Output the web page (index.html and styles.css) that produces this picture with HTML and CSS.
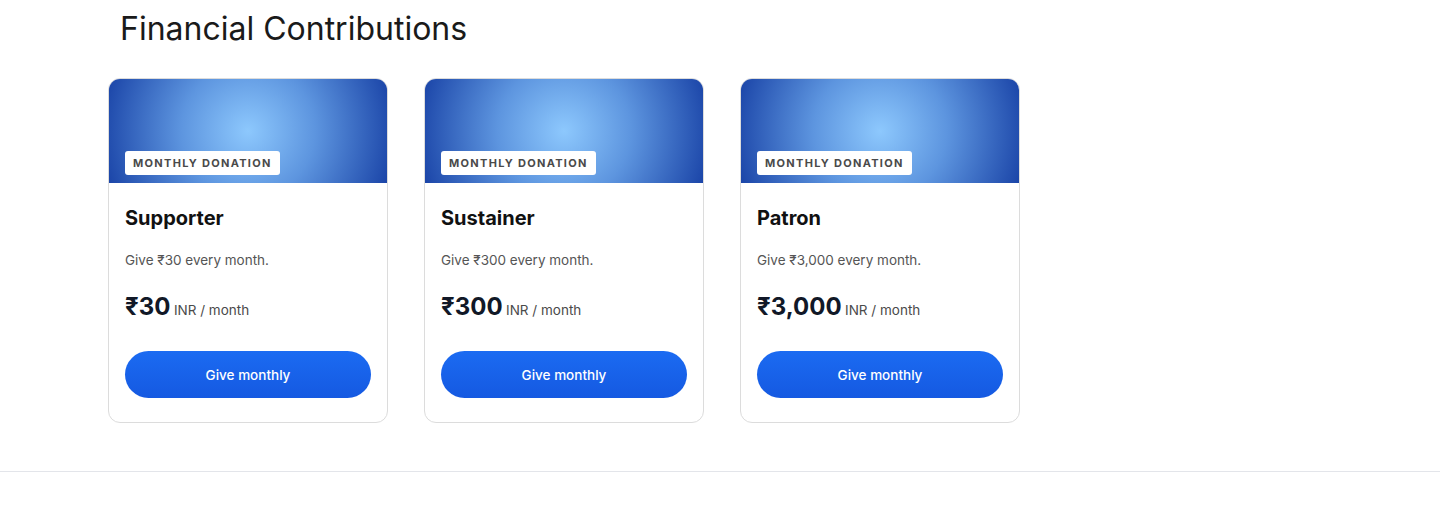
FILE: index.html
```html
<!DOCTYPE html>
<html lang="en">
<head>
<meta charset="utf-8">
<title>Financial Contributions</title>
<link rel="stylesheet" href="styles.css">
</head>
<body>
<section class="contrib">
  <h2 class="contrib-title">Financial Contributions</h2>
  <div class="tiers">
    <article class="tier">
      <div class="tier-banner"><span class="tier-badge">Monthly donation</span></div>
      <div class="tier-body">
        <h3 class="tier-name">Supporter</h3>
        <p class="tier-desc">Give ₹30 every month.</p>
        <p class="tier-price"><span class="amount">₹30</span> <span class="unit">INR / month</span></p>
        <button class="tier-btn" type="button">Give monthly</button>
      </div>
    </article>
    <article class="tier">
      <div class="tier-banner"><span class="tier-badge">Monthly donation</span></div>
      <div class="tier-body">
        <h3 class="tier-name">Sustainer</h3>
        <p class="tier-desc">Give ₹300 every month.</p>
        <p class="tier-price"><span class="amount">₹300</span> <span class="unit">INR / month</span></p>
        <button class="tier-btn" type="button">Give monthly</button>
      </div>
    </article>
    <article class="tier">
      <div class="tier-banner"><span class="tier-badge">Monthly donation</span></div>
      <div class="tier-body">
        <h3 class="tier-name">Patron</h3>
        <p class="tier-desc">Give ₹3,000 every month.</p>
        <p class="tier-price"><span class="amount">₹3,000</span> <span class="unit">INR / month</span></p>
        <button class="tier-btn" type="button">Give monthly</button>
      </div>
    </article>
  </div>
</section>
<footer class="page-foot"></footer>
</body>
</html>
```

FILE: styles.css
```css
* { box-sizing: border-box; }

html, body {
  margin: 0;
  padding: 0;
  background: #ffffff;
  font-family: Inter, "Noto Sans", "DejaVu Sans", sans-serif;
  color: #111111;
}

.contrib {
  padding: 10px 0 48px 108px;
}

.contrib-title {
  margin: 0 0 30px 12px;
  font-size: 32px;
  font-weight: 400;
  line-height: 38px;
  color: #1a1a1a;
}

.tiers {
  display: flex;
  gap: 36px;
}

.tier {
  width: 280px;
  border: 1px solid #dcdcdc;
  border-radius: 12px;
  overflow: hidden;
  background: #ffffff;
}

.tier-banner {
  height: 104px;
  display: flex;
  align-items: flex-end;
  padding: 0 16px 8px;
  background: radial-gradient(circle at 50% 50%, #8dc8fd 0%, #5d95df 45%, #1b45a8 100%);
}

.tier-badge {
  display: inline-flex;
  align-items: center;
  height: 24px;
  padding: 0 8px;
  background: #ffffff;
  border-radius: 3px;
  font-size: 11px;
  font-weight: 700;
  letter-spacing: 1.3px;
  text-transform: uppercase;
  color: #4a4a4a;
}

.tier-body {
  padding: 23px 16px 24px;
}

.tier-name {
  margin: 0;
  font-size: 20px;
  line-height: 24px;
  font-weight: 700;
  color: #111111;
}

.tier-desc {
  margin: 20px 0 0;
  font-size: 13.5px;
  line-height: 20px;
  color: #555555;
}

.tier-price {
  margin: 22px 0 0;
  line-height: 30px;
}

.amount {
  font-size: 24px;
  font-weight: 700;
  color: #111827;
  margin-right: -1px;
}

.unit {
  font-size: 13.5px;
  color: #4a4a4a;
}

.tier-btn {
  display: block;
  width: 100%;
  height: 47px;
  margin-top: 26px;
  border: 0;
  border-radius: 999px;
  background: linear-gradient(180deg, #1b6bf2 0%, #1559e1 100%);
  color: #ffffff;
  font-family: inherit;
  font-size: 13.5px;
  font-weight: 500;
  cursor: pointer;
}

.page-foot {
  border-top: 1px solid #e3e5ea;
  height: 49px;
}
```
